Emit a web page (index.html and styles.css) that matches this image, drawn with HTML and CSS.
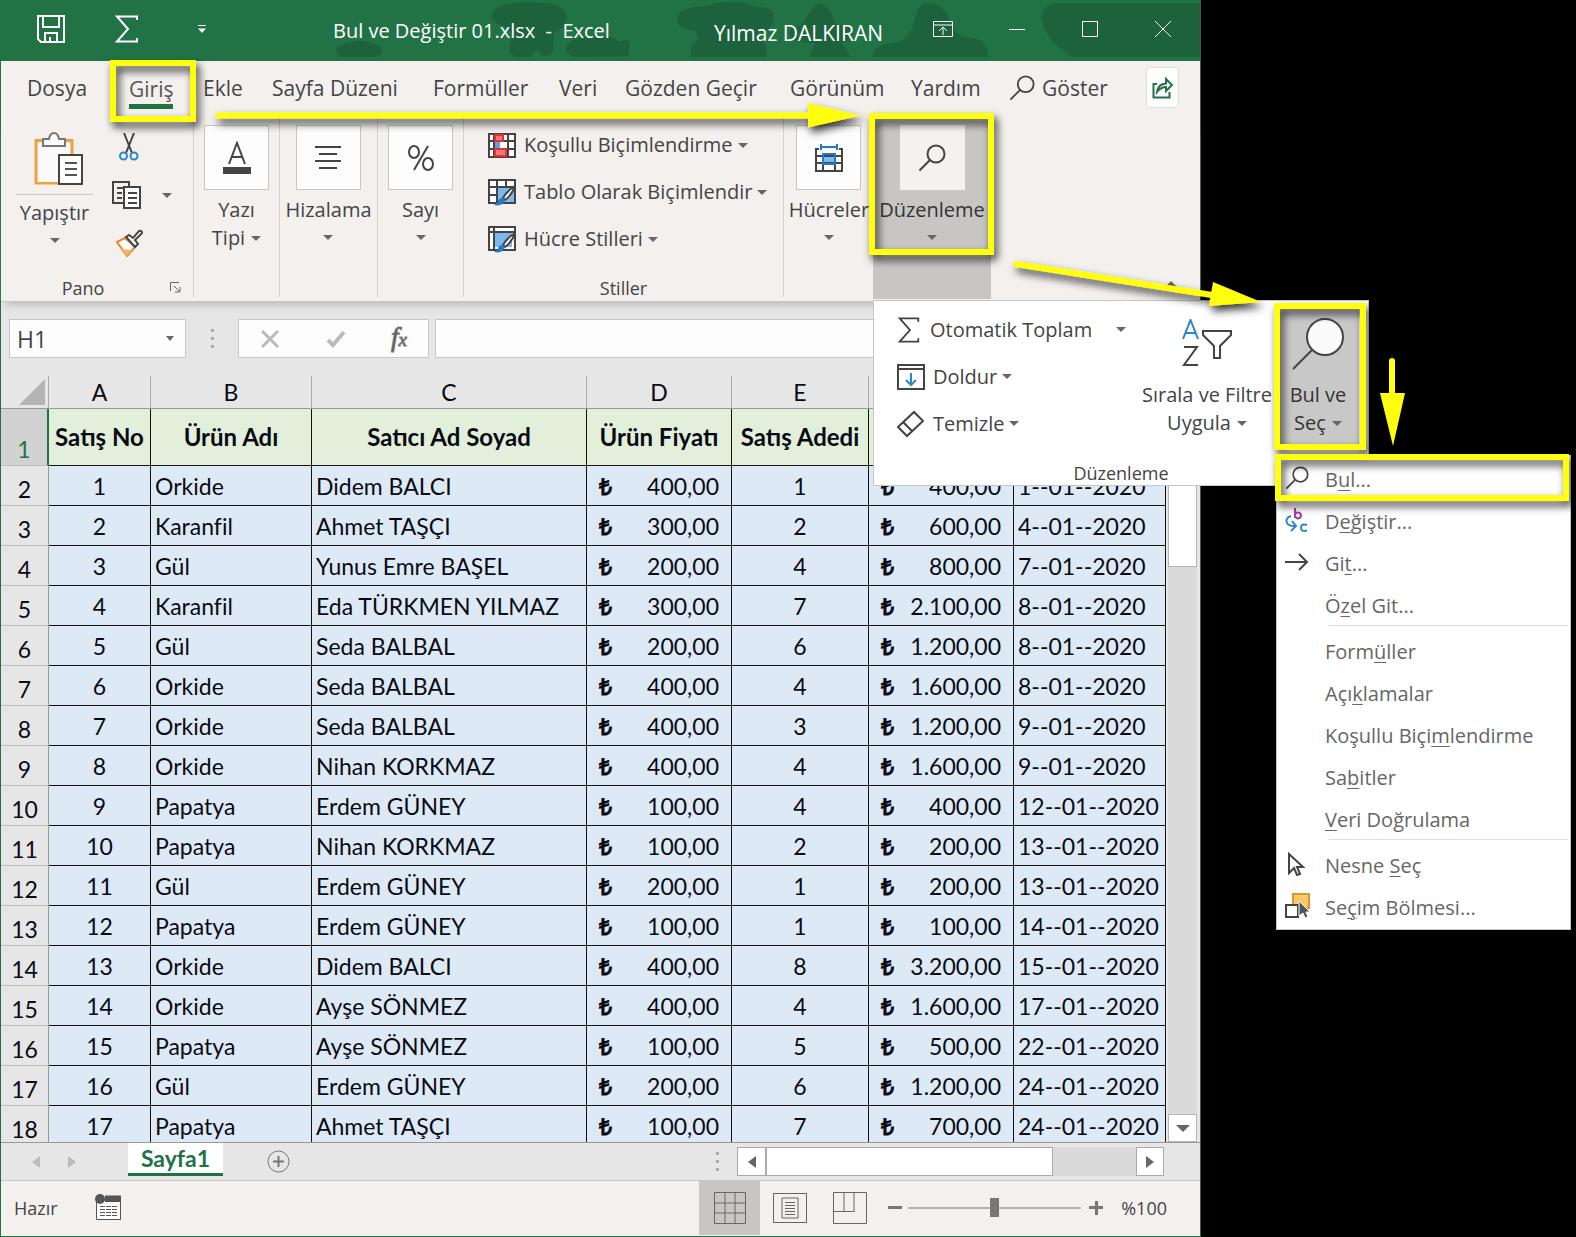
FILE: index.html
```html
<!DOCTYPE html>
<html lang="tr">
<head>
<meta charset="utf-8">
<title>Bul ve Değiştir 01.xlsx - Excel</title>
<link rel="stylesheet" href="styles.css">
</head>
<body>
<svg class="defs" width="0" height="0" aria-hidden="true">
  <symbol id="i-lens" viewBox="0 0 28 28"><circle cx="18" cy="10" r="8.5"/><path d="M12 16 1.5 26.5"/></symbol>
  <symbol id="i-sigma" viewBox="0 0 24 28"><path d="M22 5V1.5H2L13 14 2 26.5h20V23"/></symbol>
</svg>
<div class="screen">
<main class="window">
  <header class="titlebar">
    <svg class="blobs" viewBox="0 0 870 57" width="870" height="57" aria-hidden="true"><g fill="#1c633d"><path d="M7 47q22-12 44 0 4 10-10 10H16Q4 57 7 47z"/><path d="M162 14q4-12 38-12 32 0 36 12 2 14-12 18l-1 12q4 12-10 12l-6-6-8 7h-12q-10-2-7-14 6-12-8-18-12-2-10-11z"/><path d="M236 46q14-14 30-8 12-6 24 4 14-8 8 14l-50 1q-14-1-12-11z"/><path d="M347 18q2-12 32-12 4-4 25-4 16 0 20 5 22-1 20 11-2 14-16 14 0 8 6 10 4 8 2 15h-74q-4-12 6-18l-2-8q-20-2-19-13z"/><path d="M459 32q4-8 12-6Q484 4 490 3q10 2 16 22 14-2 16 8-2 8-10 10l9 14h-42l6-14q-24 0-26-11z"/><path d="M543 57q-2-12 20-14 18-2 22-25Q588 2 600 3q14 2 20 17 4 16 16 17 24 2 22 20z"/><path d="M712 20q-2-14 14-17h144v54H743q-26-14-31-37z"/></g></svg>
    <button class="tb thick" aria-label="Kaydet"><svg width="28" height="28" viewBox="0 0 28 28"><path d="M1 1h26v26H4l-3-3zM6 1v11h16V1M8 27v-9h12v9M13 27v-5"/></svg></button>
    <button class="tb thick" aria-label="Otomatik Toplam"><svg width="24" height="28"><use href="#i-sigma"/></svg></button>
    <button class="tb" aria-label="Özelleştir"><svg width="8" height="8" viewBox="0 0 8 8"><path d="M0 .5h8"/><path d="M0 3.500h8L4 8z" fill="#fff" stroke="none"/></svg></button>
    <h1 class="doc">Bul ve Değiştir 01.xlsx&nbsp; -&nbsp; Excel</h1>
    <span class="user">Yılmaz DALKIRAN</span>
    <button class="tb" aria-label="Şerit seçenekleri"><svg width="20" height="16" viewBox="0 0 20 16"><path d="M.5.5h19v15H.5zM.5 4h19M10 14V7M6 10l4-4 4 4"/></svg></button>
    <button class="tb" aria-label="Küçült"><svg width="16" height="16" viewBox="0 0 16 16"><path d="M0 8.500h16"/></svg></button>
    <button class="tb" aria-label="Büyüt"><svg width="16" height="16" viewBox="0 0 16 16"><path d="M.5.5h15v15H.5z"/></svg></button>
    <button class="tb" aria-label="Kapat"><svg width="16" height="16" viewBox="0 0 16 16"><path d="M0 0l16 16M16 0 0 16"/></svg></button>
  </header>

  <nav class="tabs">
    <a href="#">Dosya</a><a href="#" class="active">Giriş</a><a href="#">Ekle</a><a href="#">Sayfa Düzeni</a><a href="#">Formüller</a><a href="#">Veri</a><a href="#">Gözden Geçir</a><a href="#">Görünüm</a><a href="#">Yardım</a>
    <a href="#" class="tell"><svg class="ln" width="26" height="26"><use href="#i-lens"/></svg>Göster</a>
    <button class="share" aria-label="Paylaş"><svg width="22" height="22" viewBox="0 0 22 22"><path d="M5 7H1.500v13.500h16V15M5 15q1-8 9-8.500V2l6 6-6 6v-4q-5 0-9 5z"/></svg></button>
  </nav>

  <section class="ribbon">
    <div class="group pano">
      <button class="paste">
        <svg width="50" height="54" viewBox="0 0 50 54" fill="none"><path d="M11 8.500H2V51h22M30 8.500h8V23" stroke="#f0a040" stroke-width="3"/><path d="M4 10h32v40H4z" fill="#fafafa"/><path d="M9 14V7h6q1-6 5-6t5 6h6v7z" fill="#fafafa" stroke="#777" stroke-width="2"/><path d="M25 23h23v29H25z" fill="#fff" stroke="#444" stroke-width="2"/><path d="M31 31h12M31 37h12M31 43h12" stroke="#555" stroke-width="2"/></svg>
        <span class="paste-label">Yapıştır</span><i class="caret"></i>
      </button>
      <div class="clip">
        <button aria-label="Kes"><svg width="20" height="28" viewBox="0 0 20 28" fill="none"><path d="M5 0l8 20M15 0 7 20" stroke="#444" stroke-width="2"/><g stroke="#2b88c8" stroke-width="2"><circle cx="4.500" cy="23" r="3.500"/><circle cx="15" cy="23" r="3.500"/></g></svg></button>
        <button aria-label="Kopyala" class="copy"><svg width="30" height="28" viewBox="0 0 30 28" fill="none" stroke="#444" stroke-width="2"><path d="M11 22H1V1h16v4M5 7h6M5 12h5M5 17h5"/><path d="M12 6h16v21H12z" fill="#fff"/><path d="M16 12h9M16 17h9M16 22h9"/></svg><i class="caret"></i></button>
        <button aria-label="Biçim Boyacısı"><svg width="28" height="28" viewBox="0 0 28 28" fill="none"><path d="M2 13l8-4 10 9-8 9z" fill="#fff" stroke="#e58a2c" stroke-width="2"/><path d="M6 20l11 1-5 6z" fill="#f6b26b"/><path d="M11 8l3-2 4 3 6-7q3-1 3 2l-7 7 3 4-3 3z" fill="#fff" stroke="#444" stroke-width="2"/></svg></button>
      </div>
      <span class="glabel">Pano</span>
      <svg class="launch" width="11" height="11" viewBox="0 0 11 11" fill="none" stroke="#666"><path d="M.5 9V.5H9M4 4l5 5M10 5v5H5"/></svg>
    </div>
    <div class="group"><button class="big"><span class="tile"><svg width="30" height="34" viewBox="0 0 30 34" fill="none"><path d="M7 23 15 2l8 21M10 16h10" stroke="#444" stroke-width="2"/><path d="M1 26h28v7H1z" fill="#444"/></svg></span><span>Yazı</span><span class="lc">Tipi<i class="caret"></i></span></button></div>
    <div class="group"><button class="big"><span class="tile"><svg width="26" height="26" viewBox="0 0 26 26" stroke="#444" stroke-width="2"><path d="M0 2h26M4 9h18M0 16h26M4 23h18"/></svg></span><span>Hizalama</span><i class="caret"></i></button></div>
    <div class="group"><button class="big"><span class="tile"><svg width="28" height="26" viewBox="0 0 28 26" fill="none" stroke="#444" stroke-width="2"><ellipse cx="7" cy="7" rx="5" ry="6"/><ellipse cx="21" cy="19" rx="5" ry="6"/><path d="M21 1 7 25"/></svg></span><span>Sayı</span><i class="caret"></i></button></div>
    <div class="group styles">
      <button class="row"><svg width="28" height="25" viewBox="0 0 28 25" fill="none"><path d="M1 1h26v23H1z" fill="#fff"/><path d="M1 1h26v23H1zM6 1v23M20 1v23M1 8h26M1 16h26" stroke="#444" stroke-width="2"/><path d="M7 2h8v6H7zM7 16h11v7H7z" fill="#f77" stroke="#d33" stroke-width="2"/><path d="M7 9h5v6H7z" fill="#5aa0e0"/></svg>Koşullu Biçimlendirme<i class="caret"></i></button>
      <button class="row"><svg width="28" height="27" viewBox="0 0 28 27" fill="none"><path d="M1 1h26v23H1z" fill="#fff"/><path d="M9 8h18v16H9z" fill="#7db8ee"/><path d="M1 1h26v23H1zM9 1v23M18 1v7M1 8h26M1 16h8" stroke="#444" stroke-width="2"/><path d="M27 7q-8 5-12 12l2 2q7-5 10-14z" fill="#fff" stroke="#444" stroke-width="2"/><path d="M15 19q-5 0-5 4l-4 3q9 2 11-5z" fill="#2878c8"/></svg>Tablo Olarak Biçimlendir<i class="caret"></i></button>
      <button class="row"><svg width="28" height="27" viewBox="0 0 28 27" fill="none"><path d="M1 1h26v23H1z" fill="#fff"/><path d="M6 6h18v15H6z" fill="#7db8ee"/><path d="M1 1h26v23H1zM6 1v23M1 6h26" stroke="#444" stroke-width="2"/><path d="M27 7q-8 5-12 12l2 2q7-5 10-14z" fill="#fff" stroke="#444" stroke-width="2"/><path d="M15 19q-5 0-5 4l-4 3q9 2 11-5z" fill="#2878c8"/></svg>Hücre Stilleri<i class="caret"></i></button>
      <span class="glabel">Stiller</span>
    </div>
    <div class="group last"><button class="big"><span class="tile"><svg width="28" height="28" viewBox="0 0 28 28" fill="none"><path d="M8 10h12v10H8z" fill="#7db8ee"/><path d="M4 5H1v22h26V5h-3M8 10v17M20 10v17M1 12h26M1 19h26" stroke="#444" stroke-width="2"/><path d="M6 0v6M22 0v6M6 3h16M8 10h12v10H8z" stroke="#2878c8" stroke-width="2"/></svg></span><span>Hücreler</span><i class="caret"></i></button></div>
    <div class="group open"><button class="big"><span class="tile"><svg class="ln" width="28" height="28"><use href="#i-lens"/></svg></span><span>Düzenleme</span><i class="caret"></i></button></div>
    <i class="collapse"></i>
  </section>

  <section class="formula">
    <label class="namebox"><input value="H1" aria-label="Ad Kutusu"><i class="caret small"></i></label>
    <i class="dots"></i>
    <div class="fxbox"><svg width="20" height="18" viewBox="0 0 20 18" fill="none" stroke="#bbb" stroke-width="3"><path d="M2 1l16 16M18 1 2 17"/></svg><svg width="20" height="18" viewBox="0 0 20 18" fill="none" stroke="#bbb" stroke-width="4"><path d="M2 10l5 5L18 2"/></svg><em>f<sub>x</sub></em></div>
    <input class="fx" aria-label="Formül çubuğu">
  </section>

  <section class="sheet">
    <table>
      <colgroup><col class="w-n"><col class="w-a"><col class="w-b"><col class="w-c"><col class="w-d"><col class="w-e"><col class="w-f"><col class="w-g"></colgroup>
      <thead><tr><th class="corner"><i></i></th><th>A</th><th>B</th><th>C</th><th>D</th><th>E</th><th></th><th></th></tr></thead>
      <tbody>
        <tr class="head"><th>1</th><td>Satış No</td><td>Ürün Adı</td><td>Satıcı Ad Soyad</td><td>Ürün Fiyatı</td><td>Satış Adedi</td><td></td><td></td></tr>
        <tr><th>2</th><td>1</td><td>Orkide</td><td>Didem BALCI</td><td><p><b>₺</b>400,00</p></td><td>1</td><td><p><b>₺</b>400,00</p></td><td>1--01--2020</td></tr>
        <tr><th>3</th><td>2</td><td>Karanfil</td><td>Ahmet TAŞÇI</td><td><p><b>₺</b>300,00</p></td><td>2</td><td><p><b>₺</b>600,00</p></td><td>4--01--2020</td></tr>
        <tr><th>4</th><td>3</td><td>Gül</td><td>Yunus Emre BAŞEL</td><td><p><b>₺</b>200,00</p></td><td>4</td><td><p><b>₺</b>800,00</p></td><td>7--01--2020</td></tr>
        <tr><th>5</th><td>4</td><td>Karanfil</td><td>Eda TÜRKMEN YILMAZ</td><td><p><b>₺</b>300,00</p></td><td>7</td><td><p><b>₺</b>2.100,00</p></td><td>8--01--2020</td></tr>
        <tr><th>6</th><td>5</td><td>Gül</td><td>Seda BALBAL</td><td><p><b>₺</b>200,00</p></td><td>6</td><td><p><b>₺</b>1.200,00</p></td><td>8--01--2020</td></tr>
        <tr><th>7</th><td>6</td><td>Orkide</td><td>Seda BALBAL</td><td><p><b>₺</b>400,00</p></td><td>4</td><td><p><b>₺</b>1.600,00</p></td><td>8--01--2020</td></tr>
        <tr><th>8</th><td>7</td><td>Orkide</td><td>Seda BALBAL</td><td><p><b>₺</b>400,00</p></td><td>3</td><td><p><b>₺</b>1.200,00</p></td><td>9--01--2020</td></tr>
        <tr><th>9</th><td>8</td><td>Orkide</td><td>Nihan KORKMAZ</td><td><p><b>₺</b>400,00</p></td><td>4</td><td><p><b>₺</b>1.600,00</p></td><td>9--01--2020</td></tr>
        <tr><th>10</th><td>9</td><td>Papatya</td><td>Erdem GÜNEY</td><td><p><b>₺</b>100,00</p></td><td>4</td><td><p><b>₺</b>400,00</p></td><td>12--01--2020</td></tr>
        <tr><th>11</th><td>10</td><td>Papatya</td><td>Nihan KORKMAZ</td><td><p><b>₺</b>100,00</p></td><td>2</td><td><p><b>₺</b>200,00</p></td><td>13--01--2020</td></tr>
        <tr><th>12</th><td>11</td><td>Gül</td><td>Erdem GÜNEY</td><td><p><b>₺</b>200,00</p></td><td>1</td><td><p><b>₺</b>200,00</p></td><td>13--01--2020</td></tr>
        <tr><th>13</th><td>12</td><td>Papatya</td><td>Erdem GÜNEY</td><td><p><b>₺</b>100,00</p></td><td>1</td><td><p><b>₺</b>100,00</p></td><td>14--01--2020</td></tr>
        <tr><th>14</th><td>13</td><td>Orkide</td><td>Didem BALCI</td><td><p><b>₺</b>400,00</p></td><td>8</td><td><p><b>₺</b>3.200,00</p></td><td>15--01--2020</td></tr>
        <tr><th>15</th><td>14</td><td>Orkide</td><td>Ayşe SÖNMEZ</td><td><p><b>₺</b>400,00</p></td><td>4</td><td><p><b>₺</b>1.600,00</p></td><td>17--01--2020</td></tr>
        <tr><th>16</th><td>15</td><td>Papatya</td><td>Ayşe SÖNMEZ</td><td><p><b>₺</b>100,00</p></td><td>5</td><td><p><b>₺</b>500,00</p></td><td>22--01--2020</td></tr>
        <tr><th>17</th><td>16</td><td>Gül</td><td>Erdem GÜNEY</td><td><p><b>₺</b>200,00</p></td><td>6</td><td><p><b>₺</b>1.200,00</p></td><td>24--01--2020</td></tr>
        <tr><th>18</th><td>17</td><td>Papatya</td><td>Ahmet TAŞÇI</td><td><p><b>₺</b>100,00</p></td><td>7</td><td><p><b>₺</b>700,00</p></td><td>24--01--2020</td></tr>
      </tbody>
    </table>
    <div class="vscroll"><i class="vthumb"></i><button aria-label="Aşağı kaydır"><i class="tri down"></i></button></div>
  </section>

  <section class="sheettabs">
    <button class="nav" aria-label="Önceki"><i class="tri left pale"></i></button><button class="nav" aria-label="Sonraki"><i class="tri right pale"></i></button>
    <button class="sheettab">Sayfa1</button>
    <button class="add" aria-label="Yeni sayfa"><svg width="23" height="23" viewBox="0 0 23 23" fill="none" stroke="#777"><circle cx="11.500" cy="11.500" r="10.500"/><path d="M6 11.500h11M11.500 6v11" stroke-width="2"/></svg></button>
    <i class="dots short"></i>
    <div class="hscroll"><button aria-label="Sola"><i class="tri left"></i></button><i class="hthumb"></i><i class="htrack"></i><button aria-label="Sağa"><i class="tri right"></i></button></div>
  </section>

  <footer class="status">
    <span class="ready">Hazır</span>
    <svg class="macro" width="27" height="27" viewBox="0 0 27 27" fill="none"><path d="M1.500 6h24v19.500h-24z" fill="#fff" stroke="#555"/><path d="M10 1.500h16V8H10z" fill="#555"/><circle cx="5" cy="5" r="5" fill="#555"/><path d="M5 12.500h17M5 15.500h17M5 18.500h17M5 21.500h17" stroke="#555" stroke-dasharray="5 1"/></svg>
    <button class="view on" aria-label="Normal"><svg width="32" height="32" viewBox="0 0 32 32"><path d="M.5.5h31v31H.5zM11 0v32M21 0v32M0 11h32M0 21h32"/></svg></button>
    <button class="view" aria-label="Sayfa Düzeni"><svg width="34" height="30" viewBox="0 0 34 30"><path d="M.5.5h33v29H.5zM9 5h16v20H9zM12 9.500h10M12 12.500h10M12 15.500h10M12 18.500h10M12 21.500h10"/></svg></button>
    <button class="view" aria-label="Sayfa Sonu"><svg width="34" height="32" viewBox="0 0 34 32"><path d="M.5.5h33v31H.5zM11 0v20M21 0v20M0 19.500h21"/></svg></button>
    <button class="zm minus" aria-label="Uzaklaştır"></button>
    <input type="range" min="0" max="200" value="100" aria-label="Yakınlaştırma">
    <button class="zm plus" aria-label="Yakınlaştır"></button>
    <span class="pct">%100</span>
  </footer>
</main>

<section class="panel">
  <div class="tools">
    <button class="row wide"><svg class="ln" width="24" height="26"><use href="#i-sigma"/></svg>Otomatik Toplam<i class="caret"></i></button>
    <button class="row"><svg width="28" height="26" viewBox="0 0 28 26" fill="none" stroke="#444" stroke-width="2"><path d="M1 1h26v24H1zM1 5h26"/><path d="M14 9v12M9 16l5 5 5-5" stroke="#2b88c8"/></svg>Doldur<i class="caret"></i></button>
    <button class="row"><svg width="28" height="28" viewBox="0 0 28 28" fill="none" stroke="#444" stroke-width="2"><path d="M1 17 17 2l9 9-16 15zM6 12l9 9"/></svg>Temizle<i class="caret"></i></button>
  </div>
  <button class="sort"><svg width="50" height="48" viewBox="0 0 50 48" fill="none" stroke="#444" stroke-width="2"><path d="M1 20 8.500 1 16 20M4 14h9" stroke="#2b88c8"/><path d="M2 28h13L2 46h14"/><path d="M21 12h28v4l-11 11v12h-6V27L21 16z"/></svg><span>Sırala ve Filtre</span><span class="lc">Uygula<i class="caret"></i></span></button>
  <button class="find"><svg class="ln" width="52" height="52" viewBox="0 0 52 52"><circle cx="33" cy="19" r="18"/><path d="M20 32 1 51"/></svg><span>Bul ve</span><span class="lc">Seç<i class="caret"></i></span></button>
  <span class="ptitle">Düzenleme</span>
</section>

<div class="menu" role="menu">
  <button role="menuitem"><svg class="ln" width="24" height="24"><use href="#i-lens"/></svg><span>B<u>u</u>l...</span></button>
  <button role="menuitem"><svg width="24" height="26" viewBox="0 0 24 26" fill="none" stroke="#2b88c8" stroke-width="2"><path d="M10 1v10M10 8q1-3 3-2.500 3 .5 3 3t-3 3q-2 0-3-3" stroke="#a23fa8"/><path d="M6 9q-6 2-4 7 1 3 8 3M7 14l4 5-5 5M22 18q-6-2-6 3 0 4 6 2.500"/></svg><span>D<u>e</u>ğiştir...</span></button>
  <button role="menuitem"><svg width="24" height="18" viewBox="0 0 24 18" fill="none" stroke="#444" stroke-width="2"><path d="M0 9h22M14 1l8 8-8 8"/></svg><span>Gi<u>t</u>...</span></button>
  <button role="menuitem"><i></i><span>Ö<u>z</u>el Git...</span></button>
  <hr>
  <button role="menuitem"><i></i><span>Form<u>ü</u>ller</span></button>
  <button role="menuitem"><i></i><span>Açı<u>k</u>lamalar</span></button>
  <button role="menuitem"><i></i><span>Koşullu Biçi<u>m</u>lendirme</span></button>
  <button role="menuitem"><i></i><span>Sa<u>b</u>itler</span></button>
  <button role="menuitem"><i></i><span><u>V</u>eri Doğrulama</span></button>
  <hr>
  <button role="menuitem"><svg width="24" height="24" viewBox="0 0 24 24" fill="#fff" stroke="#444" stroke-width="2"><path d="M4 2v19l5-5 3 7 3-1-3-7h6z"/></svg><span>Nesne <u>S</u>eç</span></button>
  <button role="menuitem"><svg width="25" height="26" viewBox="0 0 25 26"><path d="M8 1h16v14H8z" fill="#fbc868" stroke="#d9953a" stroke-width="2"/><path d="M1 12h12v12H1z" fill="#fff" stroke="#444" stroke-width="2"/><path d="M14 8v15l4-3 2 5 3-1-2-5h4z" fill="#555" stroke="#fff"/></svg><span>Se<u>ç</u>im Bölmesi...</span></button>
</div>

<svg class="notes" width="1576" height="520" viewBox="0 0 1576 520" aria-hidden="true">
  <defs><filter id="sh" filterUnits="userSpaceOnUse" x="0" y="0" width="1576" height="520"><feDropShadow dx="3" dy="5" stdDeviation="4" flood-color="#000" flood-opacity=".8"/></filter></defs>
  <g fill="none" stroke="#fffe10" stroke-width="6">
    <g filter="url(#sh)"><path d="M113 63h80v56h-80z"/></g>
    <g filter="url(#sh)"><path d="M872 116h119v136H872z"/></g>
    <g filter="url(#sh)"><path d="M1277 306h86v141h-86z"/></g>
    <g filter="url(#sh)"><path d="M1278 457h288v41h-288z"/></g>
    <g filter="url(#sh)" stroke-linecap="round"><path d="M218 115.500h592"/><path d="M808 103l53 12.500-53 12z" fill="#fffe10" stroke="none"/></g>
    <g filter="url(#sh)" stroke-linecap="round"><path d="M1016 264l196 31"/><path d="M1213 282l48 20-52 4z" fill="#fffe10" stroke="none"/></g>
    <g stroke-linecap="round"><path d="M1392 361v34"/><path d="M1380 393h25l-12 53z" fill="#fffe10" stroke="none"/></g>
  </g>
</svg>
</div>
</body>
</html>
```

FILE: styles.css
```css
* { box-sizing: border-box; }
body { margin: 0; background: #000; color: #444; font-family: "Open Sans", "Noto Sans", sans-serif; font-size: 20px; line-height: 28px; }
button, input { font: inherit; color: inherit; border: 0; padding: 0; margin: 0; background: none; }
button { display: flex; align-items: center; justify-content: center; white-space: nowrap; }
a { color: inherit; text-decoration: none; }
.defs { display: block; }
.ln { fill: none; stroke: #444; stroke-width: 2; flex: none; }
.caret { display: block; flex: none; border: 5px solid transparent; border-top-color: #666; border-bottom: 0; }
.lc { display: flex; align-items: center; gap: 6px; }

.screen { position: relative; min-height: 100vh; display: grid; grid-template-columns: minmax(0, 1201fr) 375fr; overflow: hidden; }
.window { display: flex; flex-direction: column; height: 100vh; min-height: 900px; background: #e6e6e6; border-left: 1px solid #217346; border-right: 1px solid #3d5c4b; border-bottom: 1px solid #217346; }

.titlebar { position: relative; flex: none; height: 61px; display: grid; grid-template-columns: 100px 52px 97px minmax(0, 1fr) 192px 74px 74px 72px 74px; padding-bottom: 4px; background: #217346; color: #fff; align-items: center; }
.titlebar > * { position: relative; }
.titlebar .blobs { position: absolute; left: 329px; top: 0; }
.tb { height: 50px; }
.tb svg { fill: none; stroke: #fff; stroke-width: 1; }
.tb.thick svg { stroke-width: 2; }
.doc { margin: 0; font-size: 20px; font-weight: 400; padding: 4px 0 0 83px; white-space: nowrap; }
.user { white-space: nowrap; padding-top: 8px; font-size: 21px; }

.tabs { flex: none; height: 57px; display: grid; grid-template-columns: 102px 74px 69px 161px 126px 66px 165px 121px 98px 1fr 34px; padding: 0 20px 4px 26px; align-items: center; background: #f3f0ee; font-size: 21px; white-space: nowrap; }
.tabs a { justify-self: start; }
.tabs .active { border-bottom: 5px solid #217346; margin-top: 7px; line-height: 30px; color: #555; }
.tell { display: flex; align-items: center; gap: 7px; }
.share { width: 33px; height: 41px; background: #fff; border: 1px solid #ddd; border-radius: 4px; }
.share svg { fill: none; stroke: #217346; stroke-width: 2; }

.ribbon { position: relative; flex: none; height: 184px; display: grid; grid-template-columns: 193px 86px 98px 86px 320px 90px 118px 1fr; background: #f3f0ee; border-bottom: 1px solid #c8c6c4; box-shadow: 0 8px 7px -5px #bbb; }
.group { position: relative; border-right: 1px solid #d2d0ce; margin-bottom: 4px; display: flex; flex-direction: column; align-items: center; padding-top: 7px; }
.group.last { border: 0; }
.group.open { border: 0; background: #c8c6c4; color: #333; margin: 0 1px 2px -1px; }
.big { flex-direction: column; justify-content: flex-start; }
.big .caret { margin-top: 11px; }
.big .lc .caret { margin-top: 0; }
.tile { width: 65px; height: 65px; margin-bottom: 6px; background: #fdfdfd; border: 1px solid #c8c6c4; display: flex; align-items: center; justify-content: center; }
.open .tile { background: #f3f2f1; border-color: #f3f2f1; }
.glabel { position: absolute; bottom: -3px; left: 0; right: 0; text-align: center; font-size: 18px; line-height: 24px; }
.pano { display: grid; grid-template-columns: 92px 1fr; padding: 14px 0 0 15px; align-items: start; }
.pano .glabel { right: 28px; }
.launch { position: absolute; right: 12px; bottom: 4px; }
.paste { width: 77px; flex-direction: column; }
.paste > svg { margin-left: 8px; }
.paste-label { border-top: 1px solid #c8c6c4; width: 77px; margin: 8px 0 11px; padding-top: 4px; }
.clip { display: grid; gap: 20px; justify-items: start; padding: 1px 0 0 4px; }
.clip button { height: 28px; width: 34px; }
.clip .copy { width: 60px; gap: 20px; }
.styles { align-items: flex-start; padding: 9px 0 0 24px; }
.row { height: 47px; gap: 8px; justify-content: flex-start; }
.styles .row { height: 36px; margin-bottom: 11px; }
.row .caret { margin-left: -3px; }
.collapse { position: absolute; right: 22px; top: 163px; border: 7px solid transparent; border-top: 0; border-bottom-color: #666; }

.formula { flex: none; display: grid; grid-template-columns: 177px 52px 191px 1fr; padding: 17px 0 18px 8px; height: 74px; }
.namebox, .fxbox, .fx { height: 39px; background: #fdfdfd; border: 1px solid #c6c6c6; }
.namebox { display: flex; align-items: center; padding: 0 11px 0 7px; }
.namebox input { flex: 1; min-width: 0; height: 32px; font-size: 23px; }
.caret.small { border-width: 5px 4px 0; }
.dots { justify-self: center; align-self: center; height: 20px; width: 3px; background: repeating-linear-gradient(#aaa 0 3px, transparent 3px 8px); }
.fxbox { display: flex; align-items: center; justify-content: space-between; padding: 0 21px; }
.fxbox em { font: italic 27px/30px "Liberation Serif", serif; color: #555; -webkit-text-stroke: 1px #777; }
.fxbox sub { font-size: 19px; vertical-align: baseline; }
.fx { margin-left: 6px; min-width: 0; width: auto; }

.sheet { flex: 1 1 0; min-height: 0; display: flex; justify-content: space-between; overflow: hidden; border-bottom: 1px solid #999; }
table { border-collapse: separate; border-spacing: 0; table-layout: fixed; width: 1165px; flex: none; color: #0a0a14; font-family: Lato, "Noto Sans", sans-serif; font-size: 23px; line-height: 30px; align-self: flex-start; }
.w-n { width: 48px; } .w-a { width: 102px; } .w-b { width: 161px; } .w-c { width: 275px; } .w-d { width: 145px; } .w-e { width: 137px; } .w-f { width: 145px; } .w-g { width: 152px; }
th { font-weight: 400; padding: 0; }
thead th { height: 33px; border-right: 1px solid #aaa; border-bottom: 1px solid #999; background: #e6e6e6; }
.corner i { display: block; margin-left: 18px; border: 13px solid transparent; border-right-color: #b4b4b4; border-bottom-color: #b4b4b4; width: 0; }
tbody th { border-right: 1px solid #999; border-bottom: 1px solid #bbb; vertical-align: bottom; line-height: 32px; }
td { height: 40px; padding: 0 4px; background: #ddeaf6; border-right: 1px solid #111; border-bottom: 1px solid #111; white-space: nowrap; }
td:nth-child(2), td:nth-child(6) { text-align: center; }
td p { margin: 0; padding: 0 8px; display: flex; justify-content: space-between; }
td b { font-weight: 400; font-size: 23px; font-family: "Open Sans", sans-serif; -webkit-text-stroke: 1px #0a0a14; }
.head td { height: 57px; background: #e2efda; font-weight: 700; text-align: center; padding: 0; font-size: 24px; }
.head th { background: #d2d2d2; color: #217346; border-right: 2px solid #217346; }
.vscroll { width: 29px; margin-right: 3px; background: #dadada; display: flex; flex-direction: column; justify-content: space-between; }
.vthumb { height: 191px; background: #fff; border: 1px solid #b5b5b5; }
.vscroll button { height: 28px; background: #fff; border: 1px solid #b5b5b5; }
.tri { display: block; border: 7px solid transparent; }
.down { border-top-color: #666; border-bottom: 0; }
.left { border-right-color: #666; border-left: 0; border-width: 6px 8px 6px 0; }
.right { border-left-color: #666; border-right: 0; border-width: 6px 0 6px 8px; }
.left.pale { border-right-color: #bbb; } .right.pale { border-left-color: #bbb; }

.sheettabs { flex: none; height: 37px; display: grid; grid-template-columns: 36px 74px 95px 110px 1fr 39px 427px; padding: 0 36px 0 17px; align-items: center; }
.sheettabs .nav { justify-self: start; width: 36px; }
.sheettab { align-self: start; height: 33px; background: #fff; color: #217346; font: 700 23px/30px Lato, sans-serif; border-bottom: 3px solid #217346; }
.dots.short { grid-column: 6; }
.hscroll { height: 29px; display: grid; grid-template-columns: 29px 287fr 83fr 28px; background: #dadada; }
.hscroll button, .hthumb { background: #fff; border: 1px solid #aaa; }

.status { flex: none; height: 56px; display: flex; align-items: center; background: #f3f0ee; border-top: 1px solid #c6c6c6; padding: 0 33px 2px 13px; font-size: 18px; }
.macro { margin-left: 37px; margin-right: auto; margin-bottom: 1px; }
.view { width: 60px; height: 55px; }
.view.on { background: #c8c6c4; width: 61px; }
.view svg { fill: none; stroke: #666; stroke-width: 1; }
.zm { width: 14px; height: 14px; margin-left: 8px; background: linear-gradient(#777, #777) center / 14px 3px no-repeat; }
.zm.plus { background: linear-gradient(#777, #777) center / 14px 3px no-repeat, linear-gradient(#777, #777) center / 3px 14px no-repeat; }
.status input { appearance: none; width: 173px; height: 19px; margin-left: 6px; background: linear-gradient(#b5b2b0, #b5b2b0) center / 100% 2px no-repeat; }
.status input::-webkit-slider-thumb { appearance: none; width: 9px; height: 19px; background: #777; }
.pct { margin-left: 18px; }

.panel { position: absolute; left: 873px; top: 300px; width: 496px; height: 186px; background: #fff; border: 1px solid #c6c6c6; color: #444; display: grid; grid-template-columns: 267px 132px 1fr; clip-path: polygon(0 0, 100% 0, 100% 156px, 404px 156px, 404px 100%, 0 100%); }
.tools { padding: 5px 0 0 23px; }
.wide svg { margin-right: 1px; }
.wide .caret { margin-left: 16px; }
.sort { flex-direction: column; justify-content: flex-start; padding-top: 18px; }
.sort svg { margin: 0 0 14px 0; }
.find { flex-direction: column; justify-content: flex-start; margin: 6px 9px 36px 4px; padding-top: 11px; background: #c8c8c8; color: #333; }
.find svg { margin-bottom: 11px; flex: none; }
.find circle { fill: #fafafa; }
.ptitle { position: absolute; left: 0; right: 0; bottom: 0; text-align: center; font-size: 18px; line-height: 24px; }

.menu { position: absolute; left: 1276px; top: 455px; width: 295px; padding: 3px 0 0; background: #fff; border: 1px solid #c6c6c6; color: #666; }
.menu button { width: 100%; height: 42px; display: grid; grid-template-columns: 40px 1fr; justify-items: start; padding-left: 8px; text-align: left; }
.menu svg { margin-bottom: 4px; }
.menu u { text-underline-offset: 3px; text-decoration-thickness: 1px; }
.menu hr { margin: -2px 2px 5px 52px; border: 0; border-top: 1px solid #ddd; }
.notes { position: absolute; left: 0; top: 0; pointer-events: none; }
```
